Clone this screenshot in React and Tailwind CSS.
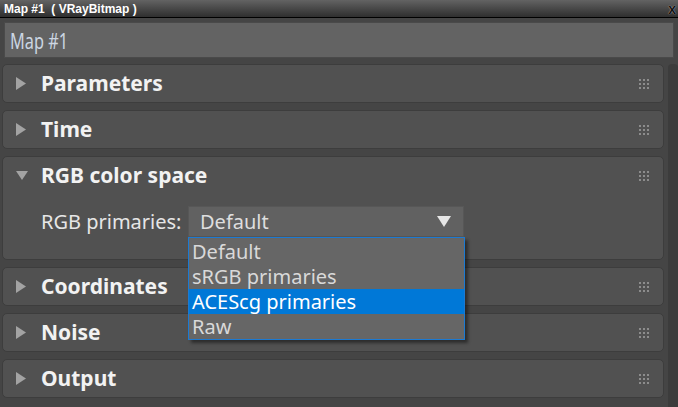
import React from "react";

const sans = { fontFamily: '"Noto Sans", "Open Sans", sans-serif' };

function Grip() {
  return (
    <div className="grid grid-cols-3 gap-[2px]">
      {Array.from({ length: 9 }).map((_, i) => (
        <div key={i} className="w-[2px] h-[2px] bg-[#8c8c8c]" />
      ))}
    </div>
  );
}

function Arrow({ open }) {
  return open ? (
    <svg width="12" height="10" viewBox="0 0 12 10">
      <path d="M0 0 L12 0 L6 9 Z" fill="#a3a3a3" />
    </svg>
  ) : (
    <svg width="10" height="13" viewBox="0 0 10 13">
      <path d="M0 0 L10 6.5 L0 13 Z" fill="#a3a3a3" />
    </svg>
  );
}

function PanelHeader({ title, open }) {
  return (
    <div className="h-[37px] flex items-center">
      <div className="w-[38px] pl-[13px] flex items-center shrink-0">
        <Arrow open={open} />
      </div>
      <span className="text-[21px] font-bold text-[#f2f2f2] leading-none flex-1 whitespace-nowrap" style={sans}>
        {title}
      </span>
      <div className="pr-[14px]">
        <Grip />
      </div>
    </div>
  );
}

function Panel({ title, open, children }) {
  return (
    <div className="bg-[#515151] border border-[#3d3d3d] rounded-[5px]">
      <PanelHeader title={title} open={open} />
      {children}
    </div>
  );
}

const options = ["Default", "sRGB primaries", "ACEScg primaries", "Raw"];

export default function App() {
  return (
    <div className="w-[678px] h-[407px] bg-[#454545] overflow-hidden flex flex-col">
      <div className="h-[18px] shrink-0 bg-gradient-to-b from-[#636363] to-[#2f2f2f] border-b border-black flex items-center justify-between pl-[4px] pr-[2px]">
        <span
          className="text-[12px] font-bold text-white leading-none"
          style={{ fontFamily: '"Liberation Sans", Arial, sans-serif' }}
        >
          Map #1&nbsp; ( VRayBitmap )
        </span>
        <span
          className="text-[14px] font-bold text-[#111] leading-none"
          style={{ fontFamily: '"Liberation Sans", Arial, sans-serif', textShadow: "0 0 1px #ddd" }}
        >
          x
        </span>
      </div>

      <div className="mx-[4px] mt-[4px] h-[36px] shrink-0 bg-[#636363] border border-[#4a4a4a] flex items-center px-[5px]">
        <span
          className="inline-block text-[22px] text-[#ccd6e2] leading-none scale-x-[0.74] origin-left whitespace-nowrap"
          style={sans}
        >
          Map #1
        </span>
      </div>

      <div className="flex mt-[6px] flex-1 min-h-0">
        <div className="ml-[2px] w-[662px] flex flex-col gap-[7px]">
          <Panel title="Parameters" />
          <Panel title="Time" />
          <Panel title="RGB color space" open>
            <div className="flex items-center mt-[12px] mb-[22px]">
              <span
                className="w-[185px] shrink-0 pl-[38px] text-[20px] text-[#e6e6e6] leading-none whitespace-nowrap"
                style={sans}
              >
                RGB primaries:
              </span>
              <div className="relative w-[276px] h-[31px] bg-[#616161] border border-[#575757] flex items-center justify-between pl-[11px] pr-[12px]">
                <span className="text-[20px] text-[#dedede] leading-none" style={sans}>
                  Default
                </span>
                <svg width="14" height="11" viewBox="0 0 14 11">
                  <path d="M0 0 L14 0 L7 11 Z" fill="#e6e6e6" />
                </svg>
                <div className="absolute left-[-1px] top-[30px] w-[277px] bg-[#666666] border border-[#1c7ad2] shadow-[3px_3px_3px_rgba(0,0,0,0.45)] z-10 pt-[1px]">
                  {options.map((o, i) => (
                    <div
                      key={o}
                      className={
                        "h-[25px] flex items-center pl-[3px] text-[20px] leading-none whitespace-nowrap " +
                        (i === 2 ? "bg-[#0078d7] text-white" : "text-[#d9d9d9]")
                      }
                      style={sans}
                    >
                      {o}
                    </div>
                  ))}
                </div>
              </div>
            </div>
          </Panel>
          <Panel title="Coordinates" />
          <Panel title="Noise" />
          <Panel title="Output" />
        </div>
        <div className="ml-[4px] w-[10px] bg-[#3c3c3c] rounded-t-[4px]" />
      </div>
    </div>
  );
}
